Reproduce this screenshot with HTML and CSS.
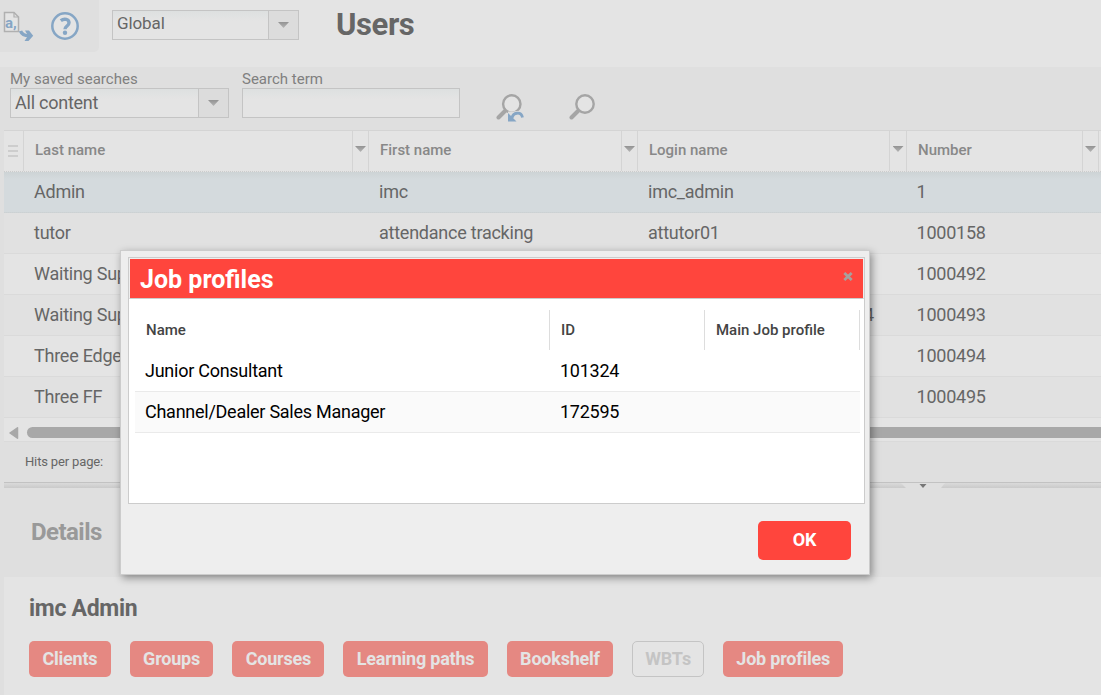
FILE: index.html
```html
<!DOCTYPE html>
<html lang="en">

<head>
    <meta charset="UTF-8">
    <meta name="viewport" content="width=device-width, initial-scale=1.0">
    <title>Users</title>
    <link rel="stylesheet" href="styles.css">
</head>

<body>
    <header class="topbar">
        <div class="tools">
            <svg class="translate-icon" width="32" height="32" viewBox="0 0 32 32">
                <path d="M1.500 1.500h9.500l4.500 4.500v14.500H1.500z" fill="#e4e4e4" stroke="#b0b0b0" stroke-width="1.500" />
                <path d="M11 1.500v4.500h4.500" fill="none" stroke="#b0b0b0" stroke-width="1.200" />
                <text x="2" y="16.500" class="icon-letter">a,</text>
                <path d="M17.500 20c1.500 4 5 5 9.500 4.800" fill="none" stroke="#86a6c5" stroke-width="3.500" />
                <path d="M22 19.500h4l4.200 5.200-4.700 5.300h-4l3.500-5.300z" fill="#86a6c5" />
            </svg>
            <svg class="help-icon" width="28" height="28" viewBox="0 0 28 28">
                <circle cx="14" cy="14" r="12.700" fill="#e4e4e4" stroke="#86a6c5" stroke-width="2.500" />
                <path d="M9.800 8.700c3.500-2.600 8.200-1.400 8.200 2 0 3.200-4 3.300-4 6.600" fill="none" stroke="#86a6c5" stroke-width="3.400" />
                <circle cx="14" cy="20.800" r="2.200" fill="#86a6c5" />
            </svg>
        </div>
        <div class="select client-select"><span>Global</span><i><b class="arrow"></b></i></div>
        <h1>Users</h1>
    </header>

    <main>
        <form class="search">
            <div class="field saved">
                <label>My saved searches</label>
                <div class="select"><span>All content</span><i><b class="arrow"></b></i></div>
            </div>
            <div class="field term">
                <label for="term">Search term</label>
                <input type="text" id="term">
            </div>
            <svg class="reset-icon" width="28" height="29" viewBox="0 0 28 29">
                <path d="M2.500 24.500L10 17" stroke="#a5a5a5" stroke-width="4" stroke-linecap="round" />
                <circle cx="15.800" cy="11" r="8.700" fill="#e4e4e4" stroke="#a5a5a5" stroke-width="2.400" />
                <path d="M12 18.500h5l8-1v10H12z" fill="#dfdfdf" />
                <path d="M16 25c1-5.500 9-7 10.500-.5" fill="none" stroke="#86a6c5" stroke-width="2.800" />
                <path d="M12 20v8.500h8.500z" fill="#86a6c5" />
            </svg>
            <svg class="find-icon" width="28" height="29" viewBox="0 0 28 29">
                <path d="M2.500 24.500L10 17" stroke="#a5a5a5" stroke-width="4" stroke-linecap="round" />
                <circle cx="16" cy="11" r="8.700" fill="#e4e4e4" stroke="#a5a5a5" stroke-width="2.400" />
            </svg>
        </form>

        <section class="grid">
            <div class="row head">
                <div class="handle"><span></span><span></span><span></span></div>
                <div>Last name<i><b class="arrow"></b></i></div>
                <div>First name<i><b class="arrow"></b></i></div>
                <div>Login name<i class="wide"><b class="arrow"></b></i></div>
                <div>Number<i><b class="arrow"></b></i></div>
            </div>
            <div class="row selected"><div></div><div>Admin</div><div>imc</div><div>imc_admin</div><div>1</div></div>
            <div class="row"><div></div><div>tutor</div><div>attendance tracking</div><div>attutor01</div><div>1000158</div></div>
            <div class="row"><div></div><div>Waiting Sup</div><div></div><div></div><div>1000492</div></div>
            <div class="row"><div></div><div>Waiting Sup</div><div></div><div class="end">4</div><div>1000493</div></div>
            <div class="row"><div></div><div>Three Edge</div><div></div><div></div><div>1000494</div></div>
            <div class="row"><div></div><div>Three FF</div><div></div><div></div><div>1000495</div></div>
            <div class="scroll">
                <svg width="10" height="12" viewBox="0 0 10 12"><path d="M1 6L8.500 .8v10.400z" fill="#a8a8a8" stroke="#a8a8a8" stroke-width="1.500" stroke-linejoin="round" /></svg>
                <div class="thumb"></div>
            </div>
            <div class="hits">Hits per page:</div>
            <div class="splitter">
                <svg width="44" height="5" viewBox="0 0 44 5"><path d="M0 0h44l-4 5H5z" fill="#dfdfdf" /><path d="M18.500 1h7l-3.500 4z" fill="#777" /></svg>
            </div>
        </section>

        <h2 class="details-title">Details</h2>
        <section class="details">
            <h2>imc Admin</h2>
            <div class="buttons">
                <button>Clients</button>
                <button>Groups</button>
                <button>Courses</button>
                <button>Learning paths</button>
                <button>Bookshelf</button>
                <button disabled>WBTs</button>
                <button>Job profiles</button>
            </div>
        </section>
    </main>

    <div class="dialog">
        <div class="dialog-box">
            <div class="dialog-title">
                <h2>Job profiles</h2>
                <svg width="10" height="9" viewBox="0 0 10 9"><path d="M1.300 1l7.400 7M8.700 1L1.300 8" stroke="#a8a09d" stroke-width="2.800" /></svg>
            </div>
            <div class="profiles">
                <div class="profile head"><div>Name</div><div>ID</div><div>Main Job profile</div></div>
                <div class="profile"><div>Junior Consultant</div><div>101324</div><div></div></div>
                <div class="profile alt"><div>Channel/Dealer Sales Manager</div><div>172595</div><div></div></div>
            </div>
        </div>
        <button class="ok">OK</button>
    </div>
</body>

</html>
```
FILE: styles.css
```css
* {
    box-sizing: border-box;
}

body {
    margin: 0;
    height: 695px;
    overflow: hidden;
    font-family: Roboto, sans-serif;
    font-size: 18px;
    color: #666;
    background-color: #dfdfdf;
}

h1,
h2 {
    margin: 0;
}

i {
    display: flex;
    align-items: center;
    justify-content: center;
}

.arrow {
    width: 11px;
    height: 6px;
    background: linear-gradient(#939393, #b5b5b5);
    clip-path: polygon(0 0, 100% 0, 50% 100%);
}

.topbar {
    display: flex;
    align-items: flex-start;
    height: 67px;
    background-color: #e4e4e4;
}

.tools {
    display: flex;
    width: 99px;
    height: 52px;
    padding: 11px 0 0 3px;
    background-color: #dfdfdf;
    border-bottom-right-radius: 5px;
}

.help-icon {
    margin: 1px 0 0 16px;
}

.icon-letter {
    font: bold 15px Roboto, sans-serif;
    fill: #86a6c5;
}

.select {
    display: flex;
    justify-content: space-between;
    height: 30px;
    border: 1px solid #c4c4c4;
    background: linear-gradient(#dde0e0, #e4e4e4 10px);
    font-size: 18px;
    line-height: 28px;
    letter-spacing: -0.24px;
}

.select span {
    padding-left: 4px;
}

.select i {
    width: 30px;
    border-left: 1px solid #c4c4c4;
    background-color: #dcdcdc;
}

.client-select {
    width: 187px;
    margin: 10px 0 0 13px;
    font-size: 17px;
    line-height: 25px;
    letter-spacing: -0.1px;
}

h1 {
    margin: 6px 0 0 37px;
    font-size: 31px;
    line-height: 38px;
    letter-spacing: -0.4px;
}

.search {
    display: flex;
    height: 63px;
    padding-left: 10px;
}

.field label {
    display: block;
    height: 21px;
    font-size: 15px;
    line-height: 24px;
    color: #808080;
}

.saved {
    width: 219px;
    margin-right: 13px;
}

.term {
    width: 218px;
}

.field input {
    display: block;
    width: 100%;
    height: 30px;
    border: 1px solid #c4c4c4;
    background: linear-gradient(#dde0e0, #e4e4e4 10px);
}

.reset-icon {
    margin: 26px 0 0 36px;
}

.find-icon {
    margin: 26px 0 0 45px;
}

.grid {
    margin-left: 4px;
    overflow: hidden;
}

.row {
    display: grid;
    grid-template-columns: 20px 345px 269px 269px 192px;
    height: 41px;
    line-height: 39px;
    letter-spacing: -0.24px;
    background-color: #e4e4e4;
    border-bottom: 1px solid #dadada;
    white-space: nowrap;
}

.row:nth-child(odd) {
    background-color: #e1e1e1;
}

.row > div {
    padding-left: 10px;
}

.row > div:last-child {
    padding-left: 9.5px;
}

.row .end {
    padding-right: 33px;
    text-align: right;
}

.grid .head {
    height: 42px;
    background-color: #e4e4e4;
    border-top: 1px solid #d4d4d4;
    border-bottom: 1px dotted #ccc;
    font-size: 15px;
    font-weight: 500;
    letter-spacing: normal;
    color: #888;
}

.grid .head > div {
    display: flex;
    justify-content: space-between;
    padding-left: 11px;
    border-right: 1px solid #d4d4d4;
}

.head i {
    width: 16px;
    padding-bottom: 4px;
    border-left: 1px solid #d4d4d4;
}

.head i.wide {
    width: 17px;
}

.grid .head .handle {
    flex-direction: column;
    justify-content: flex-start;
    gap: 3px;
    padding: 14px 5px 0 4px;
}

.handle span {
    height: 2px;
    background-color: #cdcdcd;
}

.row.selected {
    background: linear-gradient(#cdd3d5, #d4dadd 7px);
    border-bottom: 1px dotted #ccd1d3;
}

.scroll {
    display: flex;
    align-items: center;
    gap: 8px;
    height: 23px;
    padding: 7px 0 0 5px;
    background-color: #e4e4e4;
}

.scroll svg,
.thumb {
    margin-top: -1px;
}

.thumb {
    flex: 1;
    height: 11px;
    background-color: #a8a8a8;
    border-radius: 6px 0 0 6px;
}

.hits {
    height: 41px;
    padding-left: 21px;
    border-top: 1px solid #dadada;
    font-size: 13px;
    line-height: 40px;
    letter-spacing: -0.15px;
}

.splitter {
    display: flex;
    height: 6px;
    padding-left: 897px;
    border-top: 1px solid #c2c2c2;
    background: linear-gradient(#dadada, #cacaca);
}

.details-title {
    height: 89px;
    padding-left: 31px;
    font-size: 24px;
    line-height: 88px;
    letter-spacing: -0.55px;
    color: #999;
}

.details {
    height: 118px;
    margin-left: 4px;
    padding: 16px 0 0 25px;
    background-color: #e4e4e4;
}

.details h2 {
    font-size: 23px;
    line-height: 32px;
    letter-spacing: -0.3px;
}

.buttons {
    display: flex;
    gap: 19px;
    margin-top: 16px;
}

button {
    height: 36px;
    padding: 0 13.4px 1px;
    border: none;
    border-radius: 5px;
    background-color: #e58882;
    color: #e4e4e4;
    font-family: inherit;
    font-size: 18px;
    font-weight: bold;
    letter-spacing: -0.22px;
}

button:disabled {
    padding: 0 12px 1px;
    border: 1px solid #c4c4c4;
    background-color: transparent;
    color: #c4c4c4;
}

.dialog {
    position: absolute;
    top: 250px;
    left: 120px;
    display: flex;
    flex-direction: column;
    width: 750px;
    height: 325px;
    padding: 6px 4px 14px 7px;
    border: 1px solid #ccc;
    background-color: #eee;
    box-shadow: 2px 3px 8px rgba(0, 0, 0, 0.4);
}

.dialog-box {
    width: 737px;
    height: 247px;
    border: 1px solid #ccc;
    background-color: #fff;
}

.dialog-title {
    display: flex;
    justify-content: space-between;
    height: 41px;
    padding: 0 10px;
    border: 1px solid #eee;
    border-bottom-color: #ccc;
    background-color: #ff453d;
    color: #fff;
}

.dialog-title h2 {
    font-size: 25px;
    line-height: 41px;
}

.dialog-title svg {
    margin-top: 13px;
}

.profiles {
    padding: 11px 4px 0 6px;
}

.profile {
    display: grid;
    grid-template-columns: 415px 155px 155px;
    height: 41px;
    border-bottom: 1px solid #eaeaea;
    line-height: 40px;
    letter-spacing: -0.26px;
    color: #000;
}

.profile > div {
    padding-left: 10px;
}

.profile.alt {
    background-color: #fafafa;
}

.profiles .head {
    height: 41px;
    border-bottom: none;
    font-size: 15px;
    font-weight: 500;
    letter-spacing: normal;
    color: #444;
}

.profiles .head > div {
    height: 40px;
    padding-left: 11px;
    border-right: 1px solid #ddd;
}

.ok {
    align-self: flex-end;
    width: 93px;
    height: 39px;
    margin: 17px 14px 0 0;
    padding-bottom: 2px;
    background-color: #ff453d;
    color: #fff;
}
```
